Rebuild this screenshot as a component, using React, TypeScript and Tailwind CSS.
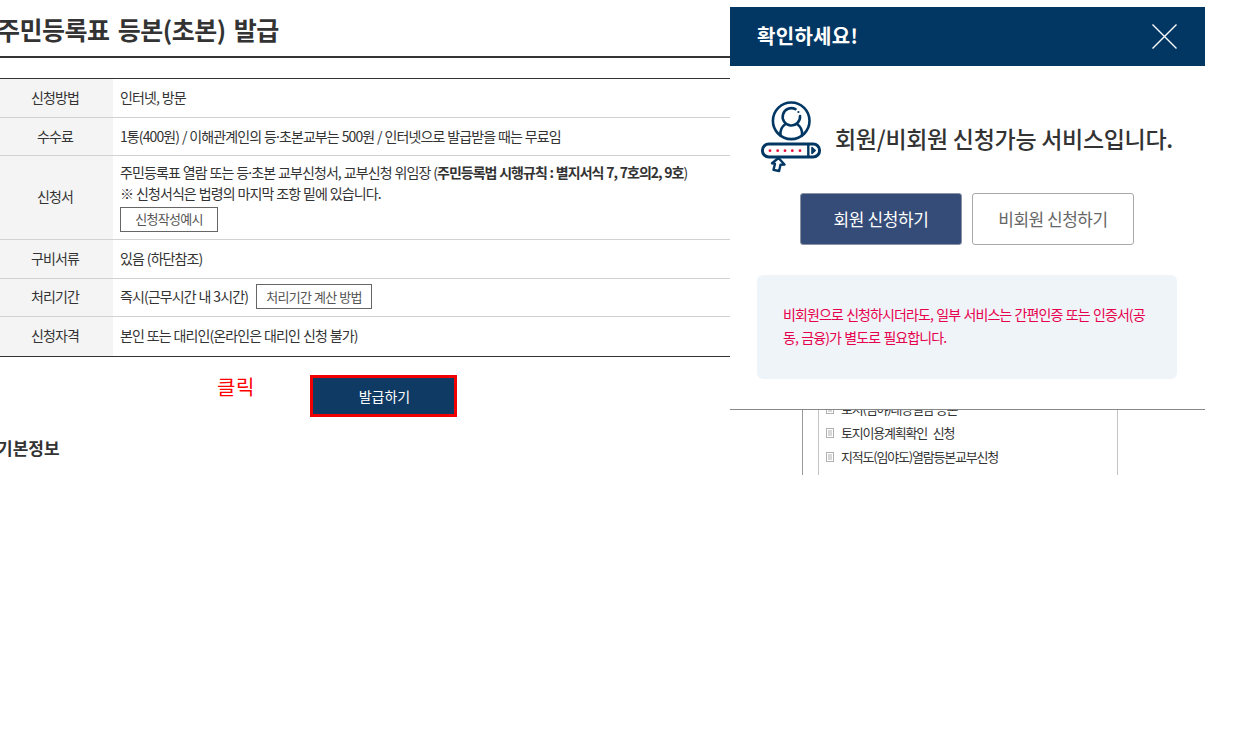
import React from "react";

const FONT = '"Noto Sans CJK KR", "Noto Sans", sans-serif';

function Dot() {
  return <span className="font-['Noto_Sans']">·</span>;
}

function Row({ label, h, pb = "pb-[2px]", border = true, children }: { label: string; h: string; pb?: string; border?: boolean; children: React.ReactNode }) {
  return (
    <div className={`flex ${h} ${border ? "border-b border-[#d2d2d2]" : ""}`}>
      <div className={`w-[113px] shrink-0 bg-[#f4f4f4] flex items-center justify-center pr-[3px] ${pb} text-[14px] tracking-[-0.9px] text-[#333]`}>
        {label}
      </div>
      <div className={`flex-1 pl-[7px] ${pb} flex flex-col justify-center text-[14px] tracking-[-0.9px] [word-spacing:0.6px] text-[#333] whitespace-nowrap`}>
        {children}
      </div>
    </div>
  );
}

function OutlineBtn({ children, w }: { children: React.ReactNode; w: string }) {
  return (
    <span className={`${w} h-[25px] border border-[#666] flex items-center justify-center text-[13px] tracking-[-0.7px] text-[#555]`}>
      {children}
    </span>
  );
}

function DocIcon() {
  return (
    <svg width="8" height="10" viewBox="0 0 8 10" className="shrink-0">
      <rect x="0.5" y="0.5" width="7" height="9" fill="none" stroke="#b0b0b0" />
      <path d="M2 3h4M2 5h4M2 7h4" stroke="#b0b0b0" />
    </svg>
  );
}

function MemberIcon() {
  return (
    <svg width="62" height="74" viewBox="0 0 62 74" className="shrink-0" fill="none" stroke="#023763">
      <circle cx="31.2" cy="20.8" r="18.3" strokeWidth="2.6" />
      <path d="M35.5 9.2A8.7 8.7 0 1 0 40 16" strokeWidth="2.6" strokeLinecap="round" />
      <circle cx="38.4" cy="12" r="1.1" fill="#023763" stroke="none" />
      <path d="M25.5 24C21 27 20 31.5 20.5 35.5M37 24C41.5 27 42.5 31.5 42 35.5" strokeWidth="2.6" strokeLinecap="round" />
      <rect x="2.4" y="44" width="57.2" height="13" rx="6.5" strokeWidth="3" />
      <path d="M48.3 44v13" strokeWidth="2.4" />
      <path d="M52 47.5l3.2 3-3.2 3z" fill="#023763" strokeWidth="1.6" strokeLinejoin="round" />
      <g fill="#e8103f" stroke="none">
        <circle cx="10" cy="50.7" r="1.4" />
        <circle cx="17.7" cy="50.7" r="1.4" />
        <circle cx="25" cy="50.7" r="1.4" />
        <circle cx="32.3" cy="50.7" r="1.4" />
        <circle cx="40" cy="50.7" r="1.4" />
      </g>
      <path d="M18.5 58l6 6.5-4 .2-1.4 6.3-5.6-1.2 1.5-6-3-.6z" fill="#fff" strokeWidth="2.4" strokeLinejoin="round" />
    </svg>
  );
}

export default function App() {
  return (
    <div className="flex w-[1205px] h-[475px] overflow-hidden bg-white" style={{ fontFamily: FONT }}>
      {/* Left: page content */}
      <div className="w-[730px] shrink-0 overflow-hidden">
        <div className="h-[58px] border-b-2 border-[#333] flex items-center -ml-[3px] pt-[4px]">
          <h1 className="text-[25px] font-bold tracking-[-0.5px] [word-spacing:3px] text-[#333] whitespace-nowrap">
            주민등록표 등본(초본) 발급
          </h1>
        </div>
        <div className="mt-[20px] border-t border-[#333] border-b">
          <Row label="신청방법" h="h-[39px]">인터넷, 방문</Row>
          <Row label="수수료" h="h-[38px]" pb="pb-0"><span>1통(400원) / 이해관계인의 등<Dot />초본교부는 500원 / 인터넷으로 발급받을 때는 무료임</span></Row>
          <Row label="신청서" h="h-[84px]">
            <p className="leading-[20px] -mt-[1px]">
              주민등록표 열람 또는 등<Dot />초본 교부신청서, 교부신청 위임장 (<b className="font-bold tracking-[-1px]">주민등록법 시행규칙 : 별지서식 7, 7호의2, 9호</b>)
            </p>
            <p className="leading-[20px]">※ 신청서식은 법령의 마지막 조항 밑에 있습니다.</p>
            <div className="flex mt-[4px] -mb-[1px]">
              <OutlineBtn w="w-[98px]">신청작성예시</OutlineBtn>
            </div>
          </Row>
          <Row label="구비서류" h="h-[39px]">있음 (하단참조)</Row>
          <Row label="처리기간" h="h-[38px]">
            <div className="flex items-center gap-[8px]">
              <span>즉시(근무시간 내 3시간)</span>
              <OutlineBtn w="w-[116px]">처리기간 계산 방법</OutlineBtn>
            </div>
          </Row>
          <Row label="신청자격" h="h-[39px]" border={false}>본인 또는 대리인(온라인은 대리인 신청 불가)</Row>
        </div>
        <div className="flex items-start mt-[18px]">
          <span className="ml-[217px] w-[39px] text-[20px] leading-[24px] tracking-[0.5px] text-[#ff0000] whitespace-nowrap">클릭</span>
          <div className="ml-[54px] w-[147px] h-[42px] bg-[#0f3a63] border-[3px] border-[#f00000] pl-[2px] flex items-center justify-center text-white text-[14px]">
            발급하기
          </div>
        </div>
        <h2 className="mt-[19px] -ml-[3px] text-[17px] leading-[24px] font-bold text-[#333]">기본정보</h2>
      </div>

      {/* Right: modal */}
      <div className="w-[475px] shrink-0 flex flex-col pt-[7px]">
        <div className="h-[59px] bg-[#023763] flex items-center justify-between pl-[27px] pr-[28px] pb-[1px]">
          <span className="text-white text-[20px] font-bold tracking-[0.3px]">확인하세요!</span>
          <svg width="25" height="25" viewBox="0 0 25 25" stroke="#fff" strokeWidth="1.4" fill="none">
            <path d="M0.5 0.5l24 24M24.5 0.5l-24 24" />
          </svg>
        </div>
        <div className="flex items-center pl-[30px] mt-[34px] h-[74px]">
          <MemberIcon />
          <span className="ml-[13px] mt-[2px] text-[23px] font-medium tracking-[-0.3px] text-[#333] whitespace-nowrap">
            회원/비회원 신청가능 서비스입니다.
          </span>
        </div>
        <div className="flex justify-center gap-[10px] mt-[19px] pr-[1px]">
          <div className="w-[162px] h-[52px] rounded-[3px] bg-[#354c78] border border-[#8b93a5] pb-[1px] flex items-center justify-center text-white text-[17px] tracking-[-0.4px]">
            회원 신청하기
          </div>
          <div className="w-[162px] h-[52px] rounded-[3px] bg-white border border-[#a8a8a8] pb-[1px] flex items-center justify-center text-[#666] text-[17px] tracking-[-0.5px]">
            비회원 신청하기
          </div>
        </div>
        <div className="mx-[27px] w-[420px] mt-[30px] h-[104px] rounded-[6px] bg-[#eff4f9] px-[26px] pb-[3px] flex items-center">
          <p className="text-[14px] leading-[23px] tracking-[-0.9px] [word-spacing:1px] break-all text-[#e6004c]">
            비회원으로 신청하시더라도, 일부 서비스는 간편인증 또는 인증서(공동, 금융)가 별도로 필요합니다.
          </p>
        </div>
        <div className="mt-[30px] border-t border-[#888] flex-1 overflow-hidden pl-[72px]">
          <div className="h-full border-l border-[#999] pl-[15px]">
            <div className="h-full w-[300px] border-x border-[#c4c4c4] pl-[7px] overflow-hidden">
              <div className="-mt-[13px] flex flex-col text-[13px] leading-[24px] tracking-[-1.2px] [word-spacing:4px] text-[#333]">
                {[<>토지(임야)대장열람<Dot />등본</>, <>토지이용계획확인 신청</>, <>지적도(임야도)열람등본교부신청</>].map((t, i) => (
                  <div key={i} className="flex items-center gap-[7px] h-[24px] whitespace-nowrap">
                    <DocIcon />
                    <span>{t}</span>
                  </div>
                ))}
              </div>
            </div>
          </div>
        </div>
      </div>
    </div>
  );
}
